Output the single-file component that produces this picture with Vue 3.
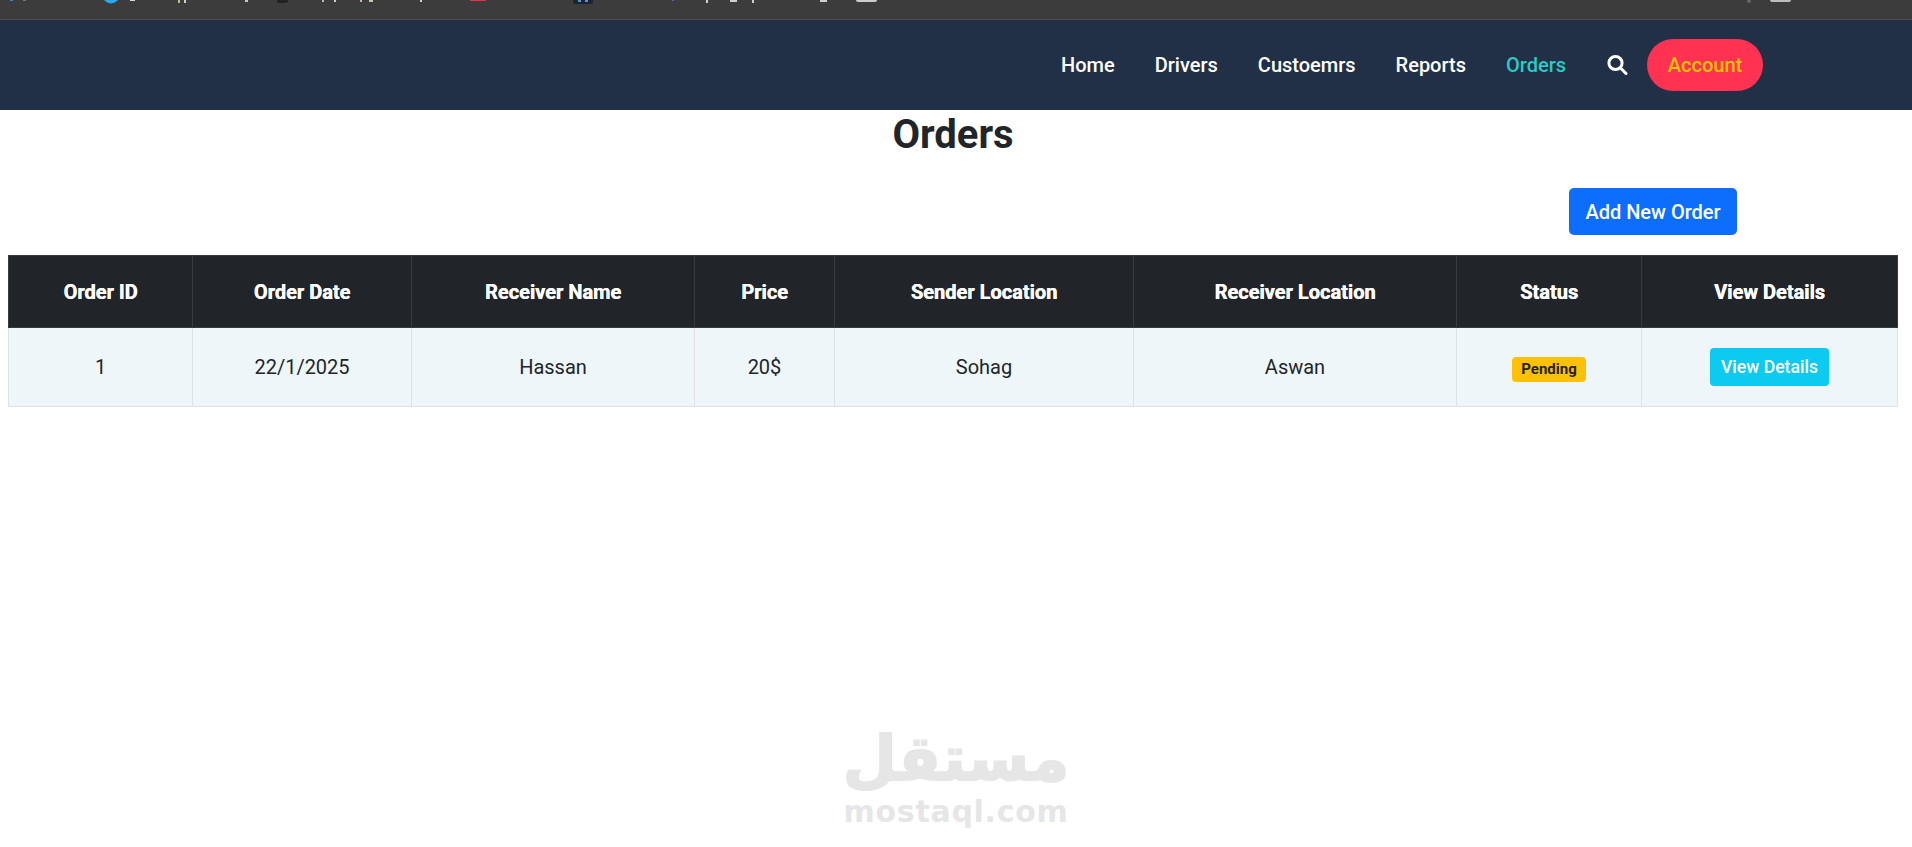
<script setup>
const links = [
  { label: 'Home' },
  { label: 'Drivers' },
  { label: 'Custoemrs' },
  { label: 'Reports' },
  { label: 'Orders', active: true }
]

const columns = [
  { label: 'Order ID', width: 184 },
  { label: 'Order Date', width: 219 },
  { label: 'Receiver Name', width: 283 },
  { label: 'Price', width: 140 },
  { label: 'Sender Location', width: 299 },
  { label: 'Receiver Location', width: 323 },
  { label: 'Status', width: 185 },
  { label: 'View Details', width: 256 }
]

const order = { id: 1, date: '22/1/2025', receiver: 'Hassan', price: '20$', sender: 'Sohag', destination: 'Aswan' }

// bits of the bookmarks bar that show above the page
const scraps = [
  [10, 3, 1, '#3b82d6'], [23, 3, 1, '#4c9a3c'], [130, 5, 1, '#d8d8d8'],
  [178, 2, 3, '#c9b79c'], [184, 2, 3, '#cfcfcf'], [245, 3, 2, '#d0c4b0'],
  [322, 2, 2, '#c9b79c'], [334, 2, 2, '#cfcfcf'], [360, 2, 2, '#c9b79c'],
  [369, 4, 2, '#d0c4b0'], [420, 2, 2, '#cfcfcf'], [470, 16, 1, '#e8304a'],
  [672, 2, 1, '#5a5ae0'], [706, 2, 3, '#cfcfcf'], [730, 7, 2, '#cfcfcf'],
  [752, 2, 3, '#cfcfcf'], [820, 7, 2, '#cfcfcf']
]
</script>

<template>
  <div class="page">
    <div class="browser-bar">
      <svg class="scraps" width="1912" height="19">
        <rect v-for="s in scraps" :key="s[0]" :x="s[0]" y="0" :width="s[1]" :height="s[2]" :fill="s[3]" />
        <circle cx="111" cy="-5" r="8.5" fill="#29a9ea" />
        <rect x="277" y="-3" width="11" height="6" rx="2" fill="#222" />
        <rect x="573" y="-4" width="20" height="8" rx="2" fill="#1c2430" />
        <rect x="578" y="0" width="3" height="2" fill="#5b8fd8" />
        <rect x="585" y="0" width="3" height="2" fill="#5b8fd8" />
        <rect x="856" y="-4" width="21" height="6" rx="2" fill="#cccccc" />
        <circle cx="1749" cy="1" r="2" fill="#666" />
        <rect x="1770" y="-4" width="21" height="6" rx="2" fill="#bdbdbd" />
      </svg>
    </div>

    <header class="navbar">
      <nav class="links">
        <a v-for="link in links" :key="link.label" class="link" :class="{ active: link.active }">{{ link.label }}</a>
      </nav>
      <svg class="search" width="22" height="22" viewBox="0 0 22 22">
        <circle cx="9.5" cy="9" r="6.6" fill="none" stroke="#fff" stroke-width="3" />
        <line x1="14.5" y1="14" x2="20" y2="19.5" stroke="#fff" stroke-width="3" stroke-linecap="round" />
      </svg>
      <button class="account">Account</button>
    </header>

    <main>
      <h1 class="title">Orders</h1>
      <div class="actions">
        <button class="add">Add New Order</button>
      </div>

      <table class="orders">
        <colgroup>
          <col v-for="c in columns" :key="c.label" :style="{ width: c.width + 'px' }" />
        </colgroup>
        <thead>
          <tr>
            <th v-for="c in columns" :key="c.label">{{ c.label }}</th>
          </tr>
        </thead>
        <tbody>
          <tr>
            <td>{{ order.id }}</td>
            <td>{{ order.date }}</td>
            <td>{{ order.receiver }}</td>
            <td>{{ order.price }}</td>
            <td>{{ order.sender }}</td>
            <td>{{ order.destination }}</td>
            <td><span class="badge">Pending</span></td>
            <td><button class="details">View Details</button></td>
          </tr>
        </tbody>
      </table>
    </main>

    <div class="watermark">
      <span class="wm-ar" dir="rtl">مستقل</span>
      <span class="wm-en">mostaql.com</span>
    </div>
  </div>
</template>

<style scoped>
.page {
  position: relative;
  height: 847px;
  overflow: hidden;
  background: #fff;
  font-family: Roboto, "Liberation Sans", sans-serif;
  color: #212529;
}

.browser-bar {
  height: 19px;
  background: #3c3c3c;
  border-bottom: 1px solid #4a4a48;
}

.scraps {
  display: block;
  overflow: hidden;
}

.navbar {
  height: 90px;
  display: flex;
  justify-content: flex-end;
  align-items: center;
  padding-right: 149px;
  background: #212f47;
}

.links {
  display: flex;
  align-items: center;
  gap: 40px;
  margin-right: 40px;
}

.link {
  font-size: 20px;
  font-weight: 500;
  color: #fff;
}

.link.active {
  color: #2bcbc4;
}

.search {
  margin-right: 19px;
}

.account {
  width: 116px;
  height: 52px;
  border: none;
  border-radius: 26px;
  background: #ff3251;
  color: #ffc107;
  font-family: inherit;
  font-size: 20px;
  font-weight: 500;
}

.title {
  margin: 0;
  padding: 1px 6px 0 0;
  height: 78px;
  box-sizing: border-box;
  text-align: center;
  font-size: 40px;
  font-weight: 700;
  line-height: 48px;
}

.actions {
  display: flex;
  justify-content: flex-end;
  padding-right: 175px;
}

.add {
  width: 168px;
  height: 47px;
  border: none;
  border-radius: 5px;
  background: #0d6efd;
  color: #fff;
  font-family: inherit;
  font-size: 20px;
  font-weight: 500;
}

.orders {
  margin: 20px 0 0 8px;
  width: 1889px;
  table-layout: fixed;
  border-collapse: collapse;
  text-align: center;
}

.orders th {
  height: 71px;
  padding: 0;
  background: #212529;
  border: 1px solid #373b3e;
  color: #fff;
  font-size: 20px;
  font-weight: 700;
  text-shadow: 0.4px 0 0 #fff;
}

.orders td {
  height: 78px;
  padding: 0;
  background: #eff6fa;
  border: 1px solid #dee2e6;
  font-size: 20px;
}

.badge {
  display: inline-block;
  width: 74px;
  height: 25px;
  line-height: 25px;
  border-radius: 4px;
  background: #ffc107;
  color: #212529;
  font-size: 15px;
  font-weight: 700;
  vertical-align: -3px;
}

.details {
  display: block;
  margin: -1px auto 0;
  width: 119px;
  height: 38px;
  border: none;
  border-radius: 4px;
  background: #0dcaf0;
  color: #fff;
  font-family: inherit;
  font-size: 17.6px;
  font-weight: 500;
}

.watermark {
  position: absolute;
  left: 845px;
  top: 722px;
  width: 222px;
  display: flex;
  flex-direction: column;
  align-items: center;
  color: #e6e6e6;
  font-family: "DejaVu Sans", sans-serif;
  font-weight: 700;
}

.wm-ar {
  font-size: 62px;
  line-height: 73px;
  white-space: nowrap;
  -webkit-text-stroke: 2px #e6e6e6;
}

.wm-en {
  font-size: 30px;
  line-height: 34px;
  letter-spacing: 0.7px;
  white-space: nowrap;
}
</style>
